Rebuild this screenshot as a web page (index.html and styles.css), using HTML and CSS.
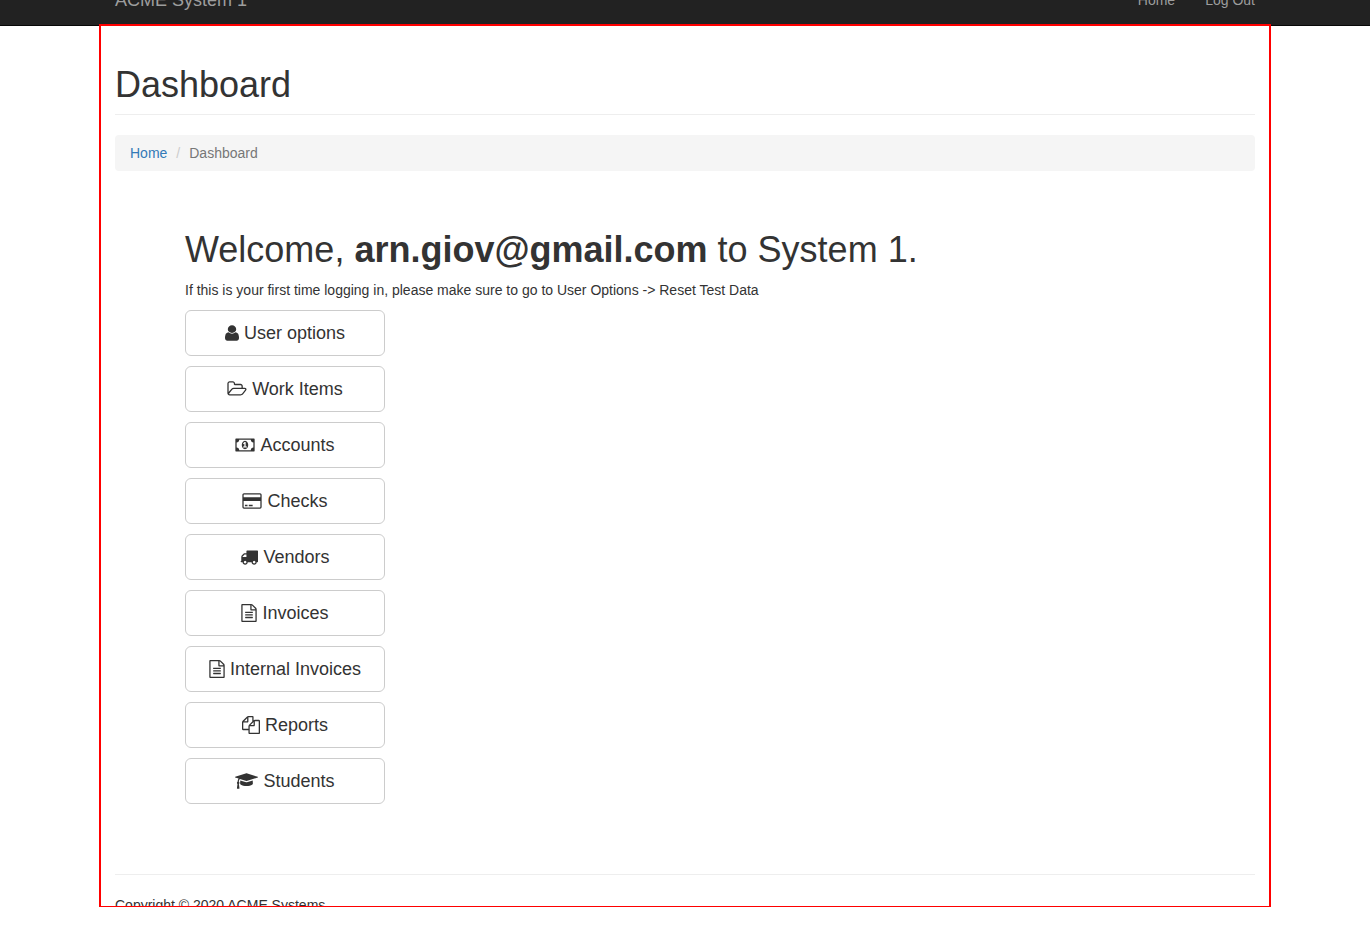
FILE: index.html
```html
<!DOCTYPE html>
<html lang="en">
<head>
<meta charset="utf-8">
<meta name="viewport" content="width=device-width, initial-scale=1">
<title>ACME System 1 - Dashboard</title>
<link rel="stylesheet" href="styles.css">
</head>
<body>
<header class="navbar">
  <nav class="navbar-inner">
    <a class="brand" href="#">ACME System 1</a>
    <ul class="nav-links">
      <li><a href="#">Home</a></li>
      <li><a href="#">Log Out</a></li>
    </ul>
  </nav>
</header>
<div class="page">
  <div class="page-header"><h1>Dashboard</h1></div>
  <ol class="breadcrumb">
    <li><a href="#">Home</a></li>
    <li>Dashboard</li>
  </ol>
  <main class="content">
    <h1>Welcome, <b>arn.giov@gmail.com</b> to System 1.</h1>
    <p>If this is your first time logging in, please make sure to go to User Options -&gt; Reset Test Data</p>
    <div class="menu">
      <button type="button" class="btn"><svg class="icon icon-user" viewBox="256 0 1280 1792" preserveAspectRatio="none" aria-hidden="true"><path d="M1536 1399q0 109-62.5 187t-150.5 78h-854q-88 0-150.5-78t-62.5-187q0-85 8.5-160.5t31.5-152 58.5-131 94-89 134.5-34.5q131 128 313 128t313-128q76 0 134.5 34.5t94 89 58.5 131 31.5 152 8.5 160.5zm-256-887q0 159-112.5 271.5t-271.5 112.5-271.5-112.5-112.5-271.5 112.5-271.5 271.5-112.5 271.5 112.5 112.5 271.5z"/></svg>User options</button>
      <button type="button" class="btn"><svg class="icon icon-wide" viewBox="64 0 1920 1792" aria-hidden="true"><path d="M1845 931q0-35-53-35h-1088q-40 0-85.500 21.500t-71.500 52.500l-294 363q-18 24-18 40 0 35 53 35h1088q40 0 86-22t71-53l294-363q18-22 18-39zm-1141-163h768v-160q0-40-28-68t-68-28h-576q-40 0-68-28t-28-68v-64q0-40-28-68t-68-28h-320q-40 0-68 28t-28 68v853l256-315q44-53 116-87.500t140-34.500zm1269 163q0 62-46 120l-295 363q-43 53-116 87.500t-140 34.500h-1088q-92 0-158-66t-66-158v-960q0-92 66-158t158-66h320q92 0 158 66t66 158v32h544q92 0 158 66t66 158v160h192q54 0 99 24.500t67 70.500q15 32 15 68z"/></svg>Work Items</button>
      <button type="button" class="btn"><svg class="icon icon-wide" viewBox="0 0 1920 1792" aria-hidden="true"><path d="M768 1152h384v-96h-128v-448h-114l-148 137 77 80q42-37 55-57h2v288h-128v96zm512-256q0 70-21 142t-59.5 134-101.5 101-138 39-138-39-101.5-101-59.5-134-21-142 21-142 59.5-134 101.5-101 138-39 138 39 101.5 101 59.5 134 21 142zm512 256v-512q-106 0-181-75t-75-181h-1152q0 106-75 181t-181 75v512q106 0 181 75t75 181h1152q0-106 75-181t181-75zm128-832v1152q0 26-19 45t-45 19h-1792q-26 0-45-19t-19-45v-1152q0-26 19-45t45-19h1792q26 0 45 19t19 45z"/></svg>Accounts</button>
      <button type="button" class="btn"><svg class="icon icon-wide" viewBox="0 0 1920 1792" aria-hidden="true"><path d="M1760 128q66 0 113 47t47 113v1216q0 66-47 113t-113 47h-1600q-66 0-113-47t-47-113v-1216q0-66 47-113t113-47h1600zm-1600 128q-13 0-22.5 9.5t-9.5 22.5v224h1664v-224q0-13-9.5-22.5t-22.5-9.5h-1600zm1600 1280q13 0 22.500-9.500t9.500-22.500v-608h-1664v608q0 13 9.500 22.500t22.500 9.500h1600zm-1504-128v-128h256v128h-256zm384 0v-128h384v128h-384z"/></svg>Checks</button>
      <button type="button" class="btn"><svg class="icon" viewBox="0 0 1792 1792" aria-hidden="true"><path d="M640 1408q0-52-38-90t-90-38-90 38-38 90 38 90 90 38 90-38 38-90zm-384-512h384v-256h-158q-13 0-22 9l-195 195q-9 9-9 22v30zm1280 512q0-52-38-90t-90-38-90 38-38 90 38 90 90 38 90-38 38-90zm256-1088v1024q0 15-4 26.5t-13.5 18.5-16.5 11.5-23.5 6-22.5 2-25.5 0-22.5-.5q0 106-75 181t-181 75-181-75-75-181h-384q0 106-75 181t-181 75-181-75-75-181h-64q-3 0-22.5.5t-25.5 0-22.5-2-23.5-6-16.5-11.5-13.5-18.5-4-26.5q0-26 19-45t45-19v-320q0-8-.5-35t0-38 2.5-34.5 6.500-37 14-30.500 22.500-30l198-198q19-19 50.500-32t58.500-13h160v-192q0-26 19-45t45-19h1024q26 0 45 19t19 45z"/></svg>Vendors</button>
      <button type="button" class="btn"><svg class="icon icon-file" viewBox="128 0 1536 1792" aria-hidden="true"><path d="M1596 380q28 28 48 76t20 88v1152q0 40-28 68t-68 28h-1344q-40 0-68-28t-28-68v-1600q0-40 28-68t68-28h896q40 0 88 20t76 48zm-444-244v376h376q-10-29-22-41l-313-313q-12-12-41-22zm384 1528v-1024h-416q-40 0-68-28t-28-68v-416h-768v1536h1280zm-1024-864q0-14 9-23t23-9h704q14 0 23 9t9 23v64q0 14-9 23t-23 9h-704q-14 0-23-9t-9-23v-64zm736 224q14 0 23 9t9 23v64q0 14-9 23t-23 9h-704q-14 0-23-9t-9-23v-64q0-14 9-23t23-9h704zm0 256q14 0 23 9t9 23v64q0 14-9 23t-23 9h-704q-14 0-23-9t-9-23v-64q0-14 9-23t23-9h704z"/></svg>Invoices</button>
      <button type="button" class="btn"><svg class="icon icon-file" viewBox="128 0 1536 1792" aria-hidden="true"><path d="M1596 380q28 28 48 76t20 88v1152q0 40-28 68t-68 28h-1344q-40 0-68-28t-28-68v-1600q0-40 28-68t68-28h896q40 0 88 20t76 48zm-444-244v376h376q-10-29-22-41l-313-313q-12-12-41-22zm384 1528v-1024h-416q-40 0-68-28t-28-68v-416h-768v1536h1280zm-1024-864q0-14 9-23t23-9h704q14 0 23 9t9 23v64q0 14-9 23t-23 9h-704q-14 0-23-9t-9-23v-64zm736 224q14 0 23 9t9 23v64q0 14-9 23t-23 9h-704q-14 0-23-9t-9-23v-64q0-14 9-23t23-9h704zm0 256q14 0 23 9t9 23v64q0 14-9 23t-23 9h-704q-14 0-23-9t-9-23v-64q0-14 9-23t23-9h704z"/></svg>Internal Invoices</button>
      <button type="button" class="btn"><svg class="icon" viewBox="0 0 1792 1792" aria-hidden="true"><path d="M1696 384q40 0 68 28t28 68v1216q0 40-28 68t-68 28h-960q-40 0-68-28t-28-68v-288h-544q-40 0-68-28t-28-68v-672q0-40 20-88t48-76l408-408q28-28 76-48t88-20h416q40 0 68 28t28 68v328q68-40 128-40h416zm-544 213l-299 299h299v-299zm-640-384l-299 299h299v-299zm196 647l316-316v-416h-384v416q0 40-28 68t-68 28h-416v640h512v-256q0-40 20-88t48-76zm956 804v-1152h-384v416q0 40-28 68t-68 28h-416v640h896z"/></svg>Reports</button>
      <button type="button" class="btn"><svg class="icon icon-cap" viewBox="0 0 2304 1792" aria-hidden="true"><path d="M1774 836l18 316q4 69-82 128t-235 93.5-323 34.5-323-34.5-235-93.5-82-128l18-316 574 181q22 7 48 7t48-7zm530-324q0 23-22 31l-1120 352q-4 1-10 1t-10-1l-652-206q-43 34-71 111.5t-34 178.5q63 36 63 109 0 69-58 107l58 433q2 14-8 25-9 11-24 11h-192q-15 0-24-11-10-11-8-25l58-433q-58-38-58-107 0-73 65-111 11-207 98-330l-333-104q-22-8-22-31t22-31l1120-352q4-1 10-1t10 1l1120 352q22 8 22 31z"/></svg>Students</button>
    </div>
  </main>
  <footer class="footer"><p>Copyright © 2020 ACME Systems</p></footer>
</div>
</body>
</html>
```

FILE: styles.css
```css
* { box-sizing: border-box; }

body {
  margin: 0;
  overflow-x: hidden;
  background: #fff;
  color: #333;
  font: 14px/20px "Liberation Sans", Arial, sans-serif;
}

h1, p, ul, ol { margin: 0; padding: 0; }

h1 {
  font-size: 36px;
  font-weight: 400;
  line-height: 40px;
}

a { color: #337ab7; text-decoration: none; }

/* The bar is half scrolled out of view */
.navbar {
  margin-top: -25px;
  background: #222;
  border-bottom: 1px solid #080808;
}

.navbar-inner {
  display: flex;
  justify-content: space-between;
  align-items: center;
  height: 50px;
  max-width: 1172px;
  margin: 0 auto;
  padding: 0 16px;
}

.navbar a { color: #9d9d9d; }
.brand { font-size: 18px; }

.nav-links {
  display: flex;
  gap: 30px;
  list-style: none;
}

.page {
  position: relative;
  max-width: 1172px;
  margin: -2px auto 0;
  padding: 39px 14px 0;
  border: 2px solid #f00;
  border-bottom-width: 1px;
}

.page-header {
  padding-bottom: 9px;
  border-bottom: 1px solid #eee;
}

.breadcrumb {
  display: flex;
  margin-top: 20px;
  padding: 8px 15px;
  border-radius: 4px;
  background: #f5f5f5;
  color: #777;
  list-style: none;
}

.breadcrumb li + li::before {
  content: "/";
  padding: 0 9px;
  color: #ccc;
}

.content { padding: 59px 70px 70px; }
.content p { margin: 10px 0; }

.menu {
  display: grid;
  grid-template-columns: 200px;
  gap: 10px;
}

.btn {
  display: flex;
  justify-content: center;
  align-items: center;
  gap: 5px;
  padding: 10px 16px;
  border: 1px solid #ccc;
  border-radius: 6px;
  background: #fff;
  color: #333;
  font: 18px/24px "Liberation Sans", Arial, sans-serif;
  white-space: nowrap;
  cursor: pointer;
}

.icon {
  flex: none;
  width: 18px;
  height: 18px;
  fill: currentColor;
}

.icon-user { width: 14px; }
.icon-wide { width: 20px; }
.icon-file { width: 16px; }
.icon-cap { width: 23px; }

.footer {
  padding-top: 20px;
  border-top: 1px solid #eee;
}

.footer p {
  height: 11px;
  overflow: hidden;
}
```
